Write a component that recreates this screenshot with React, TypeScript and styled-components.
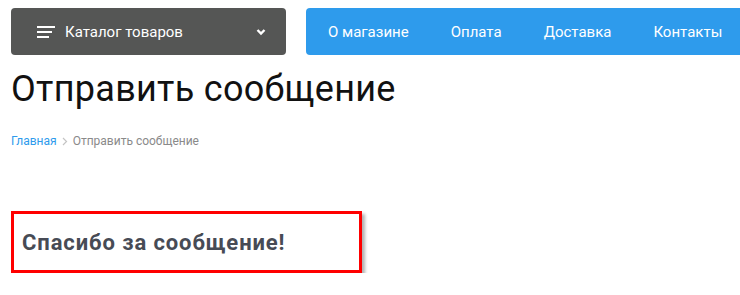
import React from "react"
import styled, { createGlobalStyle } from "styled-components"

const GlobalStyle = createGlobalStyle`
  body {
    margin: 0;
    background: #fff;
    font-family: Roboto, "Liberation Sans", sans-serif;
    overflow: hidden;
  }
`

const Page = styled.div`
  padding: 8px 0 0 11px;
`

const Header = styled.div`
  display: flex;
  gap: 20px;
  height: 47px;
`

const CatalogButton = styled.div`
  width: 275px;
  flex-shrink: 0;
  display: flex;
  align-items: center;
  box-sizing: border-box;
  padding: 0 20px 0 26px;
  background: #555655;
  border-radius: 4px;
  color: #fff;
  font-size: 15px;
`

const CatalogLabel = styled.span`
  flex: 1;
  margin-left: 10px;
`

const Nav = styled.nav`
  flex: 1;
  display: flex;
  align-items: center;
  margin-right: -40px;
  background: #2e9bec;
  border-radius: 4px 0 0 4px;
`

const NavItem = styled.a`
  padding: 0 21px;
  color: #fff;
  font-size: 15px;
  white-space: nowrap;

  &:first-child {
    padding-left: 22px;
  }
`

const Title = styled.h1`
  margin: 14px 0 0;
  font-size: 36px;
  font-weight: 400;
  letter-spacing: 0.3px;
  line-height: 40px;
  color: #111;
`

const Crumbs = styled.div`
  display: flex;
  align-items: center;
  gap: 5px;
  margin-top: 25px;
  font-size: 12px;
  color: #8a8a8a;
`

const CrumbLink = styled.a`
  color: #2e9bec;
`

const Notice = styled.div`
  width: 351px;
  height: 62px;
  box-sizing: border-box;
  margin-top: 63px;
  display: flex;
  align-items: center;
  padding-left: 8px;
  border: 3px solid #f00;
  box-shadow: 3px 3px 3px rgba(0, 0, 0, 0.3);
`

const NoticeText = styled.h2`
  margin: 0;
  font-size: 22px;
  font-weight: 700;
  letter-spacing: 0.9px;
  color: #474b55;
`

const MenuIcon = () => (
  <svg width="18" height="12" viewBox="0 0 18 12">
    <rect x="0" y="0" width="18" height="2" fill="#fff" />
    <rect x="0" y="5" width="15" height="2" fill="#fff" />
    <rect x="0" y="10" width="12" height="2" fill="#fff" />
  </svg>
)

const Chevron = () => (
  <svg width="10" height="8" viewBox="0 0 10 8">
    <path d="M1.5 2 L5 5.5 L8.5 2" stroke="#fff" strokeWidth="2.4" fill="none" />
  </svg>
)

const ArrowRight = () => (
  <svg width="6" height="9" viewBox="0 0 6 9">
    <path d="M1 1 L4.5 4.5 L1 8" stroke="#c4c4c4" strokeWidth="1.2" fill="none" />
  </svg>
)

export default function App() {
  return (
    <Page>
      <GlobalStyle />
      <Header>
        <CatalogButton>
          <MenuIcon />
          <CatalogLabel>Каталог товаров</CatalogLabel>
          <Chevron />
        </CatalogButton>
        <Nav>
          <NavItem>О магазине</NavItem>
          <NavItem>Оплата</NavItem>
          <NavItem>Доставка</NavItem>
          <NavItem>Контакты</NavItem>
        </Nav>
      </Header>
      <Title>Отправить сообщение</Title>
      <Crumbs>
        <CrumbLink>Главная</CrumbLink>
        <ArrowRight />
        <span>Отправить сообщение</span>
      </Crumbs>
      <Notice>
        <NoticeText>Спасибо за сообщение!</NoticeText>
      </Notice>
    </Page>
  )
}
